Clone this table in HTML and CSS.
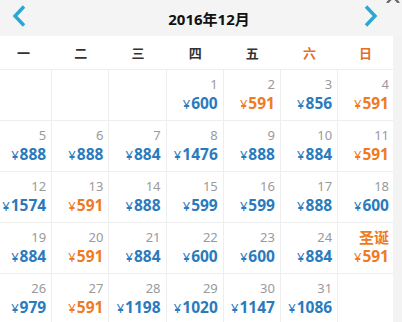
FILE: index.html
```html
<!DOCTYPE html>
<html lang="zh-CN">
<head>
<meta charset="utf-8">
<title>2016年12月</title>
<link rel="stylesheet" href="styles.css">
</head>
<body>
<div class="page">
  <svg class="close" width="16" height="12" viewBox="0 0 16 12" aria-hidden="true"><path d="M2 0 L14 12 M14 0 L2 12" stroke="#666" stroke-width="2.2" fill="none"/></svg>
  <header class="head">
    <svg class="arrow" width="14" height="22" viewBox="0 0 14 22" aria-hidden="true"><polyline points="12,1.5 3,11 12,20.5" fill="none" stroke="#2aa7d2" stroke-width="3.4"/></svg>
    <div class="title">2016年12月</div>
    <svg class="arrow" width="14" height="22" viewBox="0 0 14 22" aria-hidden="true"><polyline points="2,1.5 11,11 2,20.5" fill="none" stroke="#2aa7d2" stroke-width="3.4"/></svg>
  </header>
  <div class="cal">
    <div class="weekdays">
      <div class="wd">一</div><div class="wd">二</div><div class="wd">三</div><div class="wd">四</div><div class="wd">五</div><div class="wd we">六</div><div class="wd we">日</div>
    </div>
    <div class="grid">
      <div class="cell"></div>
      <div class="cell"></div>
      <div class="cell"></div>
      <div class="cell"><div class="day">1</div><div class="price"><span class="yen">¥</span>600</div></div>
      <div class="cell"><div class="day">2</div><div class="price low"><span class="yen">¥</span>591</div></div>
      <div class="cell"><div class="day">3</div><div class="price"><span class="yen">¥</span>856</div></div>
      <div class="cell last"><div class="day">4</div><div class="price low"><span class="yen">¥</span>591</div></div>

      <div class="cell"><div class="day">5</div><div class="price"><span class="yen">¥</span>888</div></div>
      <div class="cell"><div class="day">6</div><div class="price"><span class="yen">¥</span>888</div></div>
      <div class="cell"><div class="day">7</div><div class="price"><span class="yen">¥</span>884</div></div>
      <div class="cell"><div class="day">8</div><div class="price"><span class="yen">¥</span>1476</div></div>
      <div class="cell"><div class="day">9</div><div class="price"><span class="yen">¥</span>888</div></div>
      <div class="cell"><div class="day">10</div><div class="price"><span class="yen">¥</span>884</div></div>
      <div class="cell last"><div class="day">11</div><div class="price low"><span class="yen">¥</span>591</div></div>

      <div class="cell"><div class="day">12</div><div class="price"><span class="yen">¥</span>1574</div></div>
      <div class="cell"><div class="day">13</div><div class="price low"><span class="yen">¥</span>591</div></div>
      <div class="cell"><div class="day">14</div><div class="price"><span class="yen">¥</span>888</div></div>
      <div class="cell"><div class="day">15</div><div class="price"><span class="yen">¥</span>599</div></div>
      <div class="cell"><div class="day">16</div><div class="price"><span class="yen">¥</span>599</div></div>
      <div class="cell"><div class="day">17</div><div class="price"><span class="yen">¥</span>888</div></div>
      <div class="cell last"><div class="day">18</div><div class="price"><span class="yen">¥</span>600</div></div>

      <div class="cell"><div class="day">19</div><div class="price"><span class="yen">¥</span>884</div></div>
      <div class="cell"><div class="day">20</div><div class="price low"><span class="yen">¥</span>591</div></div>
      <div class="cell"><div class="day">21</div><div class="price"><span class="yen">¥</span>884</div></div>
      <div class="cell"><div class="day">22</div><div class="price"><span class="yen">¥</span>600</div></div>
      <div class="cell"><div class="day">23</div><div class="price"><span class="yen">¥</span>600</div></div>
      <div class="cell"><div class="day">24</div><div class="price"><span class="yen">¥</span>884</div></div>
      <div class="cell last"><div class="day holiday">圣诞</div><div class="price low"><span class="yen">¥</span>591</div></div>

      <div class="cell"><div class="day">26</div><div class="price"><span class="yen">¥</span>979</div></div>
      <div class="cell"><div class="day">27</div><div class="price low"><span class="yen">¥</span>591</div></div>
      <div class="cell"><div class="day">28</div><div class="price"><span class="yen">¥</span>1198</div></div>
      <div class="cell"><div class="day">29</div><div class="price"><span class="yen">¥</span>1020</div></div>
      <div class="cell"><div class="day">30</div><div class="price"><span class="yen">¥</span>1147</div></div>
      <div class="cell"><div class="day">31</div><div class="price"><span class="yen">¥</span>1086</div></div>
      <div class="cell last"></div>
    </div>
  </div>
</div>
</body>
</html>
```

FILE: styles.css
```css
html, body {
  margin: 0;
  padding: 0;
}
body {
  background: #f3f3f3;
  font-family: "Noto Sans", "Noto Sans CJK SC", sans-serif;
  overflow: hidden;
  width: 402px;
  height: 322px;
}
.page {
  position: relative;
  width: 402px;
}
.close {
  position: absolute;
  top: -9px;
  right: 1px;
}
.head {
  height: 36px;
  display: flex;
  align-items: center;
  padding: 0 24px 0 12px;
  background: #f4f4f4;
  box-sizing: border-box;
}
.arrow {
  display: block;
  flex: none;
  margin-top: -4px;
}
.title {
  flex: 1;
  text-align: center;
  padding-left: 28px;
  font-size: 15px;
  font-weight: bold;
  color: #111;
  line-height: 18px;
  margin-top: 2px;
}
.cal {
  width: 398px;
  margin-left: -5px;
  background: #fff;
}
.weekdays {
  display: grid;
  grid-template-columns: repeat(6, 57.2px) 1fr;
  height: 33px;
  border-bottom: 1px solid #eeeeee;
}
.wd {
  display: flex;
  align-items: center;
  justify-content: center;
  font-size: 13px;
  font-weight: bold;
  color: #333;
  font-family: "Noto Sans CJK SC", sans-serif;
}
.wd.we {
  color: #e0701f;
}
.grid {
  display: grid;
  grid-template-columns: repeat(6, 57.2px) 1fr;
  grid-auto-rows: 51px;
}
.cell {
  border-right: 1px solid #eeeeee;
  border-bottom: 1px solid #eeeeee;
  padding: 6px 5px 0 0;
  text-align: right;
  box-sizing: border-box;
}
.cell.last {
  border-right: none;
  padding-right: 4px;
}
.day {
  font-size: 13px;
  line-height: 17px;
  color: #9a9a9a;
  height: 17px;
}
.day.holiday {
  font-size: 15px;
  font-weight: bold;
  color: #f07a22;
  font-family: "Noto Sans CJK SC", sans-serif;
  line-height: 16px;
}
.price {
  font-size: 15.5px;
  font-weight: bold;
  line-height: 20px;
  color: #2a7bbd;
}
.price.low {
  color: #f07a22;
}
.yen {
  font-weight: normal;
  font-size: 13px;
  margin-right: 1px;
}
```
